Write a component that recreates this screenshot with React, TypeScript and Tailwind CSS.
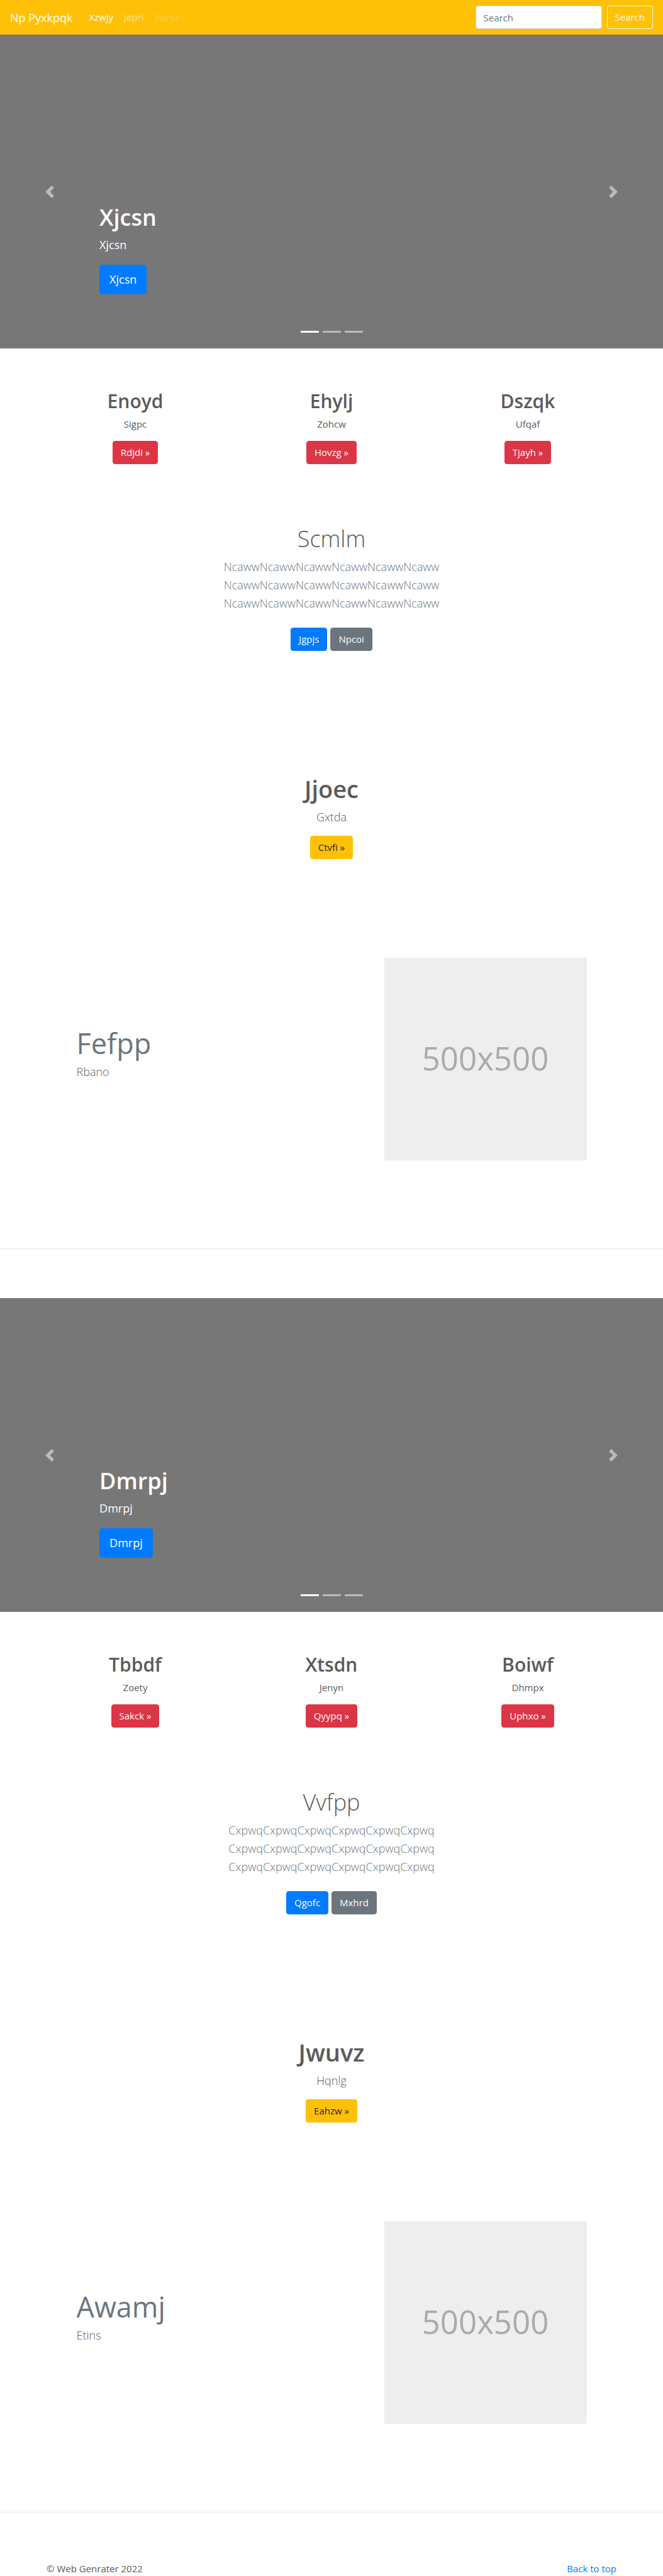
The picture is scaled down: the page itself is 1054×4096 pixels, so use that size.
import React from "react";

type Column = { title: string; text: string; action: string };

type Block = {
  hero: string;
  columns: Column[];
  intro: { title: string; word: string; primary: string; secondary: string };
  callout: Column;
  feature: { title: string; text: string };
};

const blocks: Block[] = [
  {
    hero: "Xjcsn",
    columns: [
      { title: "Enoyd", text: "Sigpc", action: "Rdjdi" },
      { title: "Ehylj", text: "Zohcw", action: "Hovzg" },
      { title: "Dszqk", text: "Ufqaf", action: "Tjayh" },
    ],
    intro: { title: "Scmlm", word: "Ncaww", primary: "Jgpjs", secondary: "Npcoi" },
    callout: { title: "Jjoec", text: "Gxtda", action: "Ctvfi" },
    feature: { title: "Fefpp", text: "Rbano" },
  },
  {
    hero: "Dmrpj",
    columns: [
      { title: "Tbbdf", text: "Zoety", action: "Sakck" },
      { title: "Xtsdn", text: "Jenyn", action: "Qyypq" },
      { title: "Boiwf", text: "Dhmpx", action: "Uphxo" },
    ],
    intro: { title: "Vvfpp", word: "Cxpwq", primary: "Qgofc", secondary: "Mxhrd" },
    callout: { title: "Jwuvz", text: "Hqnlg", action: "Eahzw" },
    feature: { title: "Awamj", text: "Etins" },
  },
];

const tones = {
  primary: "border-[#007bff] bg-[#007bff] text-white",
  secondary: "border-[#6c757d] bg-[#6c757d] text-white",
  danger: "border-[#dc3545] bg-[#dc3545] text-white",
  warning: "border-[#ffc107] bg-[#ffc107] text-[#212529]",
};

function ButtonLink({ tone, children }: { tone: keyof typeof tones; children: React.ReactNode }) {
  return (
    <a
      href="#"
      className={`inline-block rounded-[4px] border px-3 py-[6px] text-[15px] leading-[23px] ${tones[tone]}`}
    >
      {children}
    </a>
  );
}

function Navbar() {
  return (
    <header className="flex h-[55px] items-center bg-[#ffc107] px-4">
      <a href="#" className="mr-[18px] text-[18px] leading-7 text-white">
        Np Pyxkpqk
      </a>
      <nav className="flex flex-1 gap-px text-[15px] leading-[23px]">
        <a href="#" className="px-2 text-white">
          Xzwjy
        </a>
        <a href="#" className="px-2 text-white/50">
          Jepri
        </a>
        <a href="#" aria-disabled="true" className="px-2 text-white/25">
          Vurvz
        </a>
      </nav>
      <form className="flex gap-2" onSubmit={(e) => e.preventDefault()}>
        <input
          type="search"
          placeholder="Search"
          aria-label="Search"
          className="h-[37px] w-[201px] rounded-[4px] border border-[#ced4da] bg-white px-3 text-[15px] text-[#495057] placeholder:text-[#6c757d]"
        />
        <button
          type="submit"
          className="h-[37px] rounded-[4px] border border-[#f8f9fa] px-3 text-[15px] leading-[23px] text-[#f8f9fa]"
        >
          Search
        </button>
      </form>
    </header>
  );
}

function Hero({ text }: { text: string }) {
  return (
    <section className="relative flex h-[499px] flex-col items-start justify-end bg-[#777777] px-[15%] pb-[86px] text-white">
      <h1 className="text-[36px] leading-[47px] font-semibold">{text}</h1>
      <p className="mt-[7px] text-[18px] leading-[27px]">{text}</p>
      <a
        href="#"
        className="mt-[18px] rounded-[5px] bg-[#007bff] px-4 py-2 text-[18px] leading-[31px]"
      >
        {text}
      </a>
      <button
        type="button"
        aria-label="Previous"
        className="absolute inset-y-0 left-0 flex w-[15%] items-center justify-center opacity-50"
      >
        <svg viewBox="0 0 8 8" fill="#fff" className="size-5">
          <path d="M5.25 0l-4 4 4 4 1.5-1.5L4.25 4l2.5-2.5L5.25 0z" />
        </svg>
      </button>
      <button
        type="button"
        aria-label="Next"
        className="absolute inset-y-0 right-0 flex w-[15%] items-center justify-center opacity-50"
      >
        <svg viewBox="0 0 8 8" fill="#fff" className="size-5">
          <path d="M2.75 0l-1.5 1.5L3.75 4l-2.5 2.5L2.75 8l4-4-4-4z" />
        </svg>
      </button>
      <div className="absolute inset-x-0 bottom-[25px] flex justify-center gap-[6px]">
        <button type="button" aria-label="Slide 1" className="h-[3px] w-[29px] bg-white" />
        <button type="button" aria-label="Slide 2" className="h-[3px] w-[29px] bg-white/50" />
        <button type="button" aria-label="Slide 3" className="h-[3px] w-[29px] bg-white/50" />
      </div>
    </section>
  );
}

function PageBlock({ block }: { block: Block }) {
  const line = block.intro.word.repeat(6);
  return (
    <>
      <Hero text={block.hero} />

      <section className="mx-auto grid max-w-[936px] grid-cols-3 pt-[65px] text-center">
        {block.columns.map((c) => (
          <div key={c.title}>
            <h2 className="text-[30px] leading-[37px] font-semibold">{c.title}</h2>
            <p className="mt-[7px] mb-[15px] text-[15px] leading-[23px]">{c.text}</p>
            <div className="flex justify-center">
              <ButtonLink tone="danger">{c.action} »</ButtonLink>
            </div>
          </div>
        ))}
      </section>

      <section className="pt-[95px] text-center">
        <h2 className="text-[36px] leading-[47px] font-light">{block.intro.title}</h2>
        <p className="mt-[7px] mb-6 text-[18px] leading-[29px] font-light text-[#6c757d]">
          {line}
          <br />
          {line}
          <br />
          {line}
        </p>
        <div className="flex justify-center gap-[5px]">
          <ButtonLink tone="primary">{block.intro.primary}</ButtonLink>
          <ButtonLink tone="secondary">{block.intro.secondary}</ButtonLink>
        </div>
      </section>

      <section className="pt-[196px] text-center">
        <h2 className="text-[38px] leading-[47px] font-semibold">{block.callout.title}</h2>
        <p className="mt-[7px] mb-[15px] text-[18px] leading-[29px] font-light">
          {block.callout.text}
        </p>
        <div className="flex justify-center">
          <ButtonLink tone="warning">{block.callout.action} »</ButtonLink>
        </div>
      </section>

      <section className="mx-auto mt-[157px] flex max-w-[841px] justify-between px-[15px]">
        <div className="pt-[107px]">
          <h2 className="text-[45px] leading-[58px] text-[#6c757d]">{block.feature.title}</h2>
          <p className="mt-[2px] text-[18px] leading-[29px] font-light">{block.feature.text}</p>
        </div>
        <div className="flex size-[322px] items-center justify-center bg-[#eeeeee] pb-1 text-[51px] text-[#aaaaaa]">
          500x500
        </div>
      </section>

      <hr className="mt-[140px] mb-[78px] border-t border-black/10" />
    </>
  );
}

export default function App() {
  return (
    <div className="bg-white font-['Open_Sans','Noto_Sans',sans-serif] text-[#5a5a5a]">
      <Navbar />
      <main>
        {blocks.map((b) => (
          <PageBlock key={b.hero} block={b} />
        ))}
      </main>
      <footer className="mx-auto flex max-w-[936px] justify-between px-[15px] text-[15px] leading-[23px]">
        <p>© Web Genrater 2022</p>
        <a href="#" className="text-[#007bff]">
          Back to top
        </a>
      </footer>
    </div>
  );
}
